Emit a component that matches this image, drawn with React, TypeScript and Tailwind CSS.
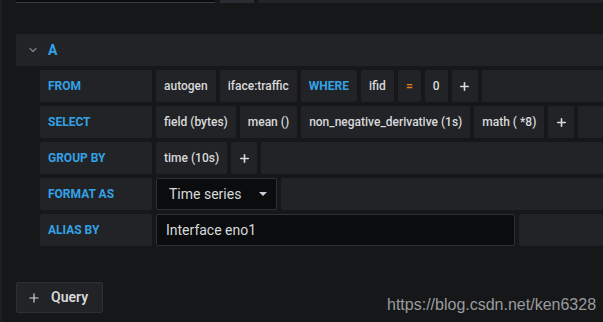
import { ChevronDown, Plus } from "lucide-react";

const font = { fontFamily: "Roboto, 'Liberation Sans', sans-serif" };

function Label({ text, wide }: { text: string; wide?: boolean }) {
  return (
    <div
      className={`flex items-center h-full px-2 rounded-[2px] bg-[#212327] text-[12px] font-bold text-[#33a2e5] ${
        wide ? "w-[112px]" : ""
      }`}
    >
      {text}
    </div>
  );
}

function Chip({ text, className = "" }: { text: string; className?: string }) {
  return (
    <div
      className={`flex items-center h-full px-2 rounded-[2px] bg-[#212327] text-[12px] font-medium text-[#d8d9da] whitespace-nowrap ${className}`}
    >
      {text}
    </div>
  );
}

function PlusChip() {
  return (
    <div className="flex items-center justify-center h-full w-[26px] rounded-[2px] bg-[#212327] text-[#d8d9da]">
      <Plus size={13} strokeWidth={3} />
    </div>
  );
}

function Filler() {
  return <div className="flex-1 h-full rounded-[2px] bg-[#212327]" />;
}

export default function App() {
  return (
    <div className="relative flex w-full h-[322px] overflow-hidden bg-[#161719]" style={font}>
      <div className="w-[2px] h-full bg-[#1d1e22]" />
      <div className="flex-1 flex flex-col pl-[14px]">
        {/* cut-off toolbar above */}
        <div className="flex gap-[4px] h-[3px] items-end">
          <div className="w-[199px] h-[3px] bg-[#0b0c0e] border-b border-[#3a3d42]" />
          <div className="w-[34px] h-[3px] bg-[#2a2c31] ml-[1px]" />
          <div className="flex-1 h-[3px] bg-[#212327]" />
        </div>

        <div className="flex items-center h-8 mt-[31px] bg-[#212327] rounded-l-[2px]">
          <ChevronDown size={12} className="ml-[11px] text-[#7b8087]" strokeWidth={2.5} />
          <span className="ml-[9px] text-[14px] font-bold text-[#33a2e5]">A</span>
        </div>

        <div className="flex flex-col gap-1 mt-1 pl-6">
          <div className="flex gap-1 h-8">
            <Label text="FROM" wide />
            <Chip text="autogen" />
            <Chip text="iface:traffic" />
            <Label text="WHERE" />
            <Chip text="ifid" />
            <div className="flex items-center justify-center h-full w-[23px] rounded-[2px] bg-[#212327] text-[12px] font-bold text-[#eb7b18]">
              =
            </div>
            <Chip text="0" />
            <PlusChip />
            <Filler />
          </div>
          <div className="flex gap-1 h-8">
            <Label text="SELECT" wide />
            <Chip text="field (bytes)" />
            <Chip text="mean ()" />
            <Chip text="non_negative_derivative (1s)" />
            <Chip text="math ( *8)" />
            <PlusChip />
            <Filler />
          </div>
          <div className="flex gap-1 h-8">
            <Label text="GROUP BY" wide />
            <Chip text="time (10s)" />
            <PlusChip />
            <Filler />
          </div>
          <div className="flex gap-1 h-8">
            <Label text="FORMAT AS" wide />
            <div className="flex items-center justify-between w-[121px] h-full pl-3 pr-[9px] rounded-[2px] bg-[#0b0c0e] border border-[#2c3235] text-[14px] text-[#d8d9da]">
              <span>Time series</span>
              <span className="w-0 h-0 border-l-[4px] border-r-[4px] border-t-[4px] border-l-transparent border-r-transparent border-t-[#c7d0d9]" />
            </div>
            <Filler />
          </div>
          <div className="flex gap-1 h-8">
            <Label text="ALIAS BY" wide />
            <div className="flex items-center w-[359px] h-full px-[9px] rounded-[2px] bg-[#0b0c0e] border border-[#2c3235] text-[14px] text-[#d8d9da]">
              Interface eno1
            </div>
            <Filler />
          </div>
        </div>

        <button className="flex items-center w-[87px] h-[31px] mt-9 pl-[10px] gap-[10px] rounded-[2px] bg-[#212327] border border-[#2c3035] text-[14px] font-semibold text-[#d8d9da]">
          <Plus size={14} strokeWidth={2} />
          <span>Query</span>
        </button>
      </div>

      <div
        className="absolute left-[387px] top-[293px] text-[16px] text-[#9a9b9e]"
        style={{ fontFamily: "'Liberation Sans', Arial, sans-serif" }}
      >
        https://blog.csdn.net/ken6328
      </div>
    </div>
  );
}
